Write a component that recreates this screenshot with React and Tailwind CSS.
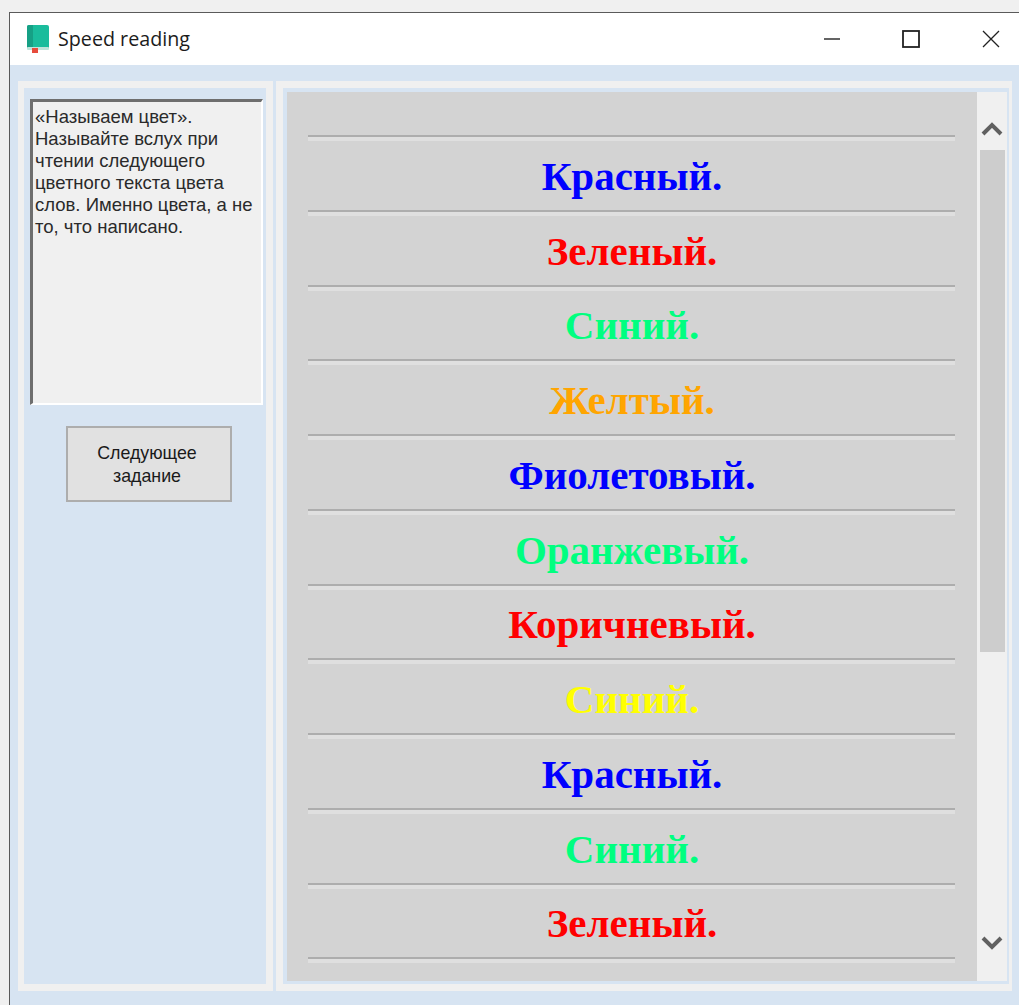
const WORDS = [
  ['Красный.', 'text-[#0000ff]'],
  ['Зеленый.', 'text-[#ff0000]'],
  ['Синий.', 'text-[#00ff7f]'],
  ['Желтый.', 'text-[#ffa500]'],
  ['Фиолетовый.', 'text-[#0000ff]'],
  ['Оранжевый.', 'text-[#00ff7f]'],
  ['Коричневый.', 'text-[#ff0000]'],
  ['Синий.', 'text-[#ffff00]'],
  ['Красный.', 'text-[#0000ff]'],
  ['Синий.', 'text-[#00ff7f]'],
  ['Зеленый.', 'text-[#ff0000]'],
]

const HINT_LINES = [
  '«Называем цвет».',
  'Называйте вслух при',
  'чтении следующего',
  'цветного текста цвета',
  'слов. Именно цвета, а не',
  'то, что написано.',
]

function BookIcon() {
  return (
    <svg width="22" height="28" viewBox="0 0 22 28" className="shrink-0">
      <path d="M2 0h18a2 2 0 0 1 2 2v22H0V2a2 2 0 0 1 2-2z" fill="#1abc9c" />
      <path d="M2 0h4v22H0V2a2 2 0 0 1 2-2z" fill="#16a085" />
      <rect x="0" y="22" width="22" height="3" rx="1" fill="#bfe3da" />
      <rect x="5" y="23" width="6" height="5" fill="#e74c3c" />
    </svg>
  )
}

function WindowButtons() {
  return (
    <div className="flex items-center">
      <svg width="16" height="16" viewBox="0 0 16 16" className="mr-[62px]">
        <path d="M0 8h16" stroke="#222" strokeWidth="1.4" />
      </svg>
      <svg width="18" height="18" viewBox="0 0 18 18" className="mr-[62px]">
        <rect x="1" y="1" width="16" height="16" fill="none" stroke="#222" strokeWidth="1.8" />
      </svg>
      <svg width="18" height="18" viewBox="0 0 18 18" className="mr-[19px]">
        <path d="M1 1l16 16M17 1L1 17" stroke="#222" strokeWidth="1.3" />
      </svg>
    </div>
  )
}

function Separator() {
  return <div className="ml-[21px] h-[6px] w-[647px] border-t-2 border-[#adadad] bg-[#dfdfdf]" />
}

function Scrollbar() {
  return (
    <div className="flex w-[30px] shrink-0 flex-col items-center bg-[#f0f0f0]">
      <svg width="22" height="14" viewBox="0 0 22 14" className="mt-[30px]">
        <path d="M2 12l9-9 9 9" fill="none" stroke="#606060" strokeWidth="4" />
      </svg>
      <div className="mt-[14px] h-[502px] w-[25px] bg-[#cdcdcd]" />
      <svg width="22" height="14" viewBox="0 0 22 14" className="mt-[284px]">
        <path d="M2 2l9 9 9-9" fill="none" stroke="#606060" strokeWidth="4" />
      </svg>
    </div>
  )
}

export default function App() {
  return (
    <div className="h-[1005px] w-[1019px] overflow-hidden bg-[#f0f0f0] pl-[9px] pt-3 font-['Liberation_Sans',sans-serif]">
      <div className="flex h-[993px] flex-col border-l border-t border-[#5a5a5a] bg-[#d7e4f2]">
        {/* title bar */}
        <div className="flex h-[52px] shrink-0 items-center justify-between bg-white pl-[17px]">
          <div className="flex items-center gap-[9px]">
            <BookIcon />
            <span className="font-['Open_Sans',sans-serif] text-[19.7px] text-[#1c1c1c]">Speed reading</span>
          </div>
          <WindowButtons />
        </div>

        <div className="flex h-[926px] gap-[3px] pl-2 pt-4">
          {/* task panel */}
          <div className="h-[910px] w-[255px] shrink-0 border-y-[7px] border-l-[6px] border-r-[7px] border-[#f0f0f0] bg-[#d7e4f2] pt-[11px]">
            <div className="ml-[6px] h-[306px] w-[233px] border-b-2 border-l-[3px] border-r-2 border-t-[3px] border-b-white border-l-[#6e6e6e] border-r-white border-t-[#6e6e6e] bg-[#f0f0f0] pl-[2px] pt-1 text-[18.5px] leading-[22px] text-[#2a2a2a]">
              {HINT_LINES.map((line) => (
                <div key={line} className="whitespace-nowrap">{line}</div>
              ))}
            </div>
            <button className="ml-[42px] mt-[21px] flex h-[76px] w-[166px] flex-col items-center justify-center border-2 border-[#adadad] bg-[#e1e1e1] pr-1 pt-[2px] text-[17.8px] leading-[23px] text-[#1a1a1a]">
              <span>Следующее</span>
              <span>задание</span>
            </button>
          </div>

          {/* word list */}
          <div className="flex h-[910px] w-[736px] shrink-0 border-y-[7px] border-l-[7px] border-r-[3px] border-[#f0f0f0]">
            <div className="flex w-full border-b-[3px] border-l-4 border-r-2 border-t-4 border-[#d7e4f2]">
              <div className="h-[889px] w-[690px] shrink-0 overflow-hidden bg-[#d3d3d3] pt-[43px]">
                <Separator />
                {WORDS.map(([word, color], i) => (
                  <div key={i}>
                    <div className={`flex h-[68.75px] items-center justify-center pt-[2px] font-['Liberation_Serif',serif] text-[41px] font-bold leading-none ${color}`}>
                      {word}
                    </div>
                    <Separator />
                  </div>
                ))}
              </div>
              <Scrollbar />
            </div>
          </div>
        </div>
      </div>
    </div>
  )
}
